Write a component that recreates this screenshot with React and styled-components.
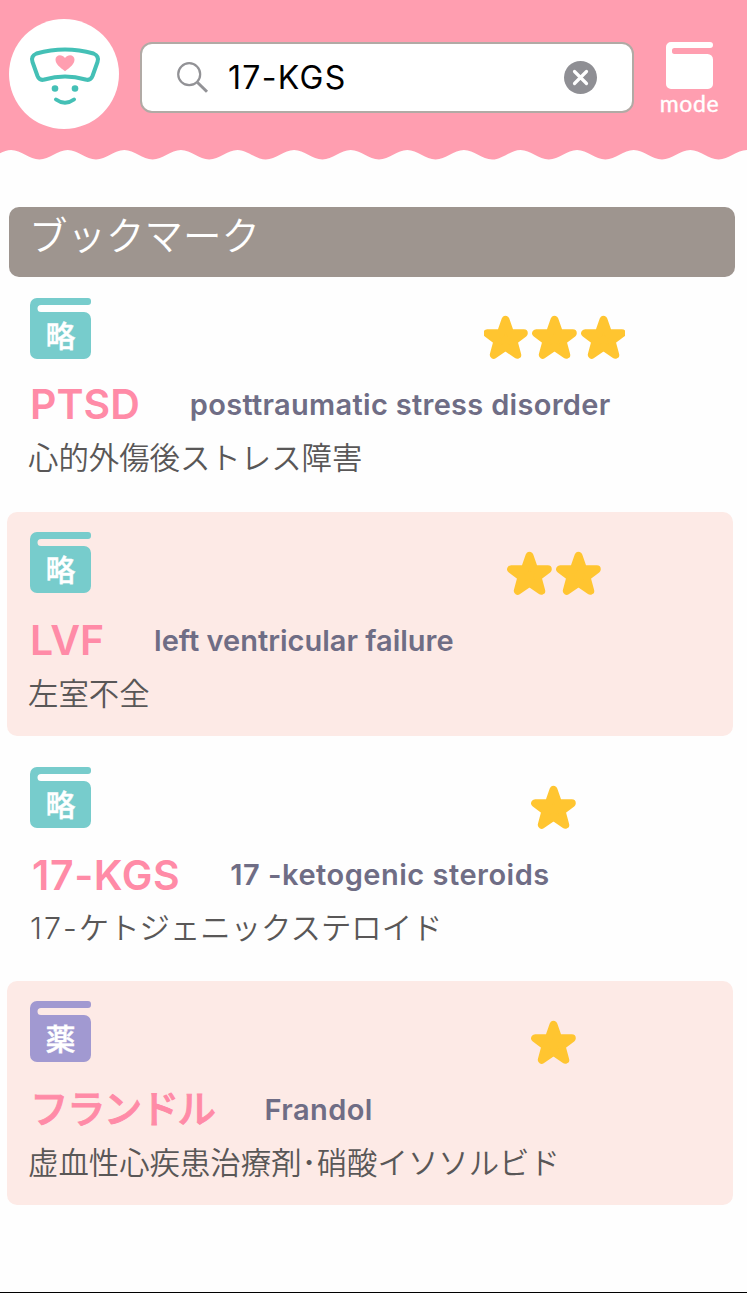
import React from "react";
import styled, { createGlobalStyle } from "styled-components";

const entries = [
  {
    kind: "略",
    color: "#77cccc",
    stars: 3,
    title: "PTSD",
    spell: "posttraumatic stress disorder",
    spacing: 0.3,
    meaning: "心的外傷後ストレス障害",
  },
  {
    kind: "略",
    color: "#77cccc",
    stars: 2,
    title: "LVF",
    spell: "left ventricular failure",
    spacing: 0,
    meaning: "左室不全",
  },
  {
    kind: "略",
    color: "#77cccc",
    stars: 1,
    title: "17-KGS",
    numeric: true,
    spell: "17 -ketogenic steroids",
    spacing: 0.5,
    prefix: "17-",
    meaning: "ケトジェニックステロイド",
  },
  {
    kind: "薬",
    color: "#a199d1",
    stars: 1,
    title: "フランドル",
    kana: true,
    spell: "Frandol",
    spacing: 0.4,
    meaning: "虚血性心疾患治療剤･硝酸イソソルビド",
  },
];

const wavePath = () => {
  let d = "M-45.5 0V5";
  for (let i = 0; i < 15; i++) {
    d += "c10 0 18.3 9.5 28.3 9.5s18.3 -9.5 28.3 -9.5";
  }
  return d + "V0z";
};

const Book = ({ color, size }) => (
  <svg width={size} height={size} viewBox="0 0 61 61">
    <path
      fill={color}
      d="M7 0H58a3 3 0 0 1 3 3v1a3 3 0 0 1-3 3H11a3.5 3.5 0 0 0 0 7H54a7 7 0 0 1 7 7V54a7 7 0 0 1-7 7H7a7 7 0 0 1-7-7V7a7 7 0 0 1 7-7z"
    />
  </svg>
);

const ModeBook = () => (
  <svg width="47" height="47" viewBox="0 0 47 47">
    <path
      fill="#fff"
      d="M5 0H44a3 3 0 0 1 0 6H8.500a2.750 2.750 0 0 0-2.500 3a2.750 2.750 0 0 0 2.500 3H41.500a5.500 5.500 0 0 1 5.500 5.500V42a5 5 0 0 1-5 5H5a5 5 0 0 1-5-5V5a5 5 0 0 1 5-5z"
    />
  </svg>
);

const Star = () => (
  <svg width="49" height="45" viewBox="-24.5 -22.5 49 45">
    <path
      d="M0-17.7L4.7-4.3H18.3L8 3.5L11.7 17.3L0 9.3L-11.7 17.3L-8 3.5L-18.3-4.3H-4.7z"
      fill="#ffc530"
      stroke="#ffc530"
      strokeWidth="8"
      strokeLinejoin="round"
    />
  </svg>
);

const Nurse = () => (
  <svg width="110" height="110" viewBox="0 0 110 110">
    <circle cx="55" cy="55" r="55" fill="#fff" />
    <g fill="none" stroke="#44c0b6" strokeWidth="4" strokeLinecap="round" strokeLinejoin="round">
      <path d="M27.500 34.500Q56 26.500 84.500 34.500Q90.500 37 88.500 43L83.500 57Q81.500 62 76.500 60.500Q56 54.500 35.500 60.500Q30.500 62 28.500 57L23.500 43Q21.500 37 27.500 34.500z" />
      <path d="M47 80.500Q56 87 65 80.500" />
    </g>
    <g fill="#44c0b6">
      <circle cx="46" cy="69.500" r="3.300" />
      <circle cx="66" cy="69.500" r="3.300" />
    </g>
    <path
      fill="#ff9eb0"
      d="M56 52.200C51 48.500 46.500 45 46.500 40.500C46.500 35.500 53 34.500 56 39C59 34.500 65.500 35.500 65.500 40.500C65.500 45 61 48.500 56 52.200z"
    />
  </svg>
);

const App = () => {
  return (
    <Page>
      <GlobalStyle />
      <Header>
        <Nurse />
        <SearchBox>
          <svg width="32" height="32" viewBox="0 0 32 32" fill="none" stroke="#929296">
            <circle cx="12.200" cy="12.200" r="11" strokeWidth="2.200" />
            <path d="M20.500 20.500L30 29.800" strokeWidth="3" />
          </svg>
          <Query>17-KGS</Query>
          <svg width="33" height="33" viewBox="0 0 33 33">
            <circle cx="16.500" cy="16.500" r="16.500" fill="#8f8f94" />
            <path
              d="M10.500 10.500L22.500 22.500M22.500 10.500L10.500 22.500"
              stroke="#fff"
              strokeWidth="3.200"
              strokeLinecap="round"
            />
          </svg>
        </SearchBox>
        <Mode>
          <ModeBook />
          <span>mode</span>
        </Mode>
      </Header>
      <Wave width="747" height="15" viewBox="0 0 747 15">
        <path d={wavePath()} fill="#ff9eb0" />
      </Wave>
      <Heading>ブックマーク</Heading>
      <List>
        {entries.map((entry, i) => (
          <Entry key={entry.title} $tinted={i % 2 === 1}>
            <Top>
              <Badge>
                <Book color={entry.color} size={61} />
                <Kind>{entry.kind}</Kind>
              </Badge>
              <Stars $lift={i === 0}>
                {Array.from({ length: entry.stars }, (_, n) => (
                  <Star key={n} />
                ))}
              </Stars>
            </Top>
            <Names>
              <Title $kana={entry.kana} $numeric={entry.numeric}>
                {entry.title}
              </Title>
              <Spell $spacing={entry.spacing}>{entry.spell}</Spell>
            </Names>
            <Meaning>
              {entry.prefix && <Prefix>{entry.prefix}</Prefix>}
              {entry.meaning}
            </Meaning>
          </Entry>
        ))}
      </List>
    </Page>
  );
};

export default App;

const GlobalStyle = createGlobalStyle`
  * {
    box-sizing: border-box;
  }

  body {
    margin: 0;
    background: #fff;
    font-family: Inter, "Noto Sans CJK JP", sans-serif;
  }

  svg {
    display: block;
    flex-shrink: 0;
  }
`;

const Page = styled.div`
  width: 747px;
  height: 1293px;
  overflow: hidden;
  background: #fefefe;
  border-bottom: 1px solid #000;
`;

const Header = styled.div`
  display: flex;
  align-items: flex-start;
  height: 145px;
  padding: 19px 0 0 9px;
  background: #ff9eb0;
`;

const SearchBox = styled.div`
  display: flex;
  align-items: center;
  width: 494px;
  height: 71px;
  margin: 23px 0 0 21px;
  padding: 0 35px 0 35px;
  background: #fff;
  border: 2.5px solid #b1aaa5;
  border-radius: 12px;
`;

const Query = styled.span`
  flex: 1;
  margin-left: 19px;
  font-size: 32px;
  line-height: 40px;
  letter-spacing: 1.3px;
  color: #000;
`;

const Mode = styled.div`
  display: flex;
  flex-direction: column;
  align-items: center;
  width: 70px;
  margin: 23px 0 0 20px;

  span {
    margin-left: 1px;
    font-family: Lato, sans-serif;
    font-size: 23px;
    line-height: 28px;
    letter-spacing: 0.6px;
    color: #fff;
    -webkit-text-stroke: 0.4px #fff;
  }
`;

const Wave = styled.svg`
  height: 15px;
`;

const Heading = styled.div`
  width: 726px;
  height: 70px;
  margin: 47px 0 0 9px;
  padding-left: 20px;
  background: #9e958f;
  border-radius: 10px;
  font-size: 38.5px;
  font-weight: 350;
  line-height: 58px;
  color: #fff;
`;

const List = styled.div`
  display: flex;
  flex-direction: column;
  gap: 10px;
  width: 726.5px;
  margin-left: 6.5px;
`;

const Entry = styled.div`
  height: 224.5px;
  padding: 20.5px 0 0 21.5px;
  background: ${(props) => (props.$tinted ? "#fdeae6" : "transparent")};
  border-radius: 10px;
`;

const Top = styled.div`
  display: flex;
  padding-left: 2px;
`;

const Badge = styled.div`
  display: grid;
  width: 61px;
  height: 61px;

  > * {
    grid-area: 1 / 1;
  }
`;

const Kind = styled.span`
  padding-top: 16px;
  font-size: 30px;
  font-weight: 500;
  line-height: 44px;
  text-align: center;
  color: #fff;
  -webkit-text-stroke: 0.4px #fff;
`;

const Stars = styled.div`
  display: flex;
  justify-content: center;
  width: 141px;
  height: 45px;
  margin: ${(props) => (props.$lift ? "17px" : "18.5px")} 0 0 393px;
  padding-right: ${(props) => (props.$lift ? "0" : "2px")};
  overflow: hidden;
`;

const Names = styled.div`
  display: flex;
  align-items: center;
  gap: 50px;
  height: 50px;
  margin-top: 19.5px;
  padding-left: 2px;
  white-space: nowrap;
`;

const Title = styled.span`
  margin-left: ${(props) => (props.$numeric ? "2px" : "0")};
  font-size: ${(props) => (props.$kana ? "38.5px" : "41px")};
  font-weight: ${(props) => (props.$kana ? 500 : 600)};
  letter-spacing: ${(props) => (props.$kana ? "-1.6px" : props.$numeric ? "0.6px" : "0")};
  line-height: 50px;
  color: #ff8ba7;
  -webkit-text-stroke: ${(props) => (props.$kana ? "0.9px #ff8ba7" : "0")};
`;

const Spell = styled.span`
  padding-top: 1px;
  font-size: 29px;
  font-weight: 600;
  line-height: 50px;
  letter-spacing: ${(props) => props.$spacing}px;
  color: #6f6d85;
`;

const Meaning = styled.div`
  margin-top: 8.5px;
  font-size: 30.4px;
  font-weight: 350;
  line-height: 40px;
  white-space: nowrap;
  color: #595757;
`;

const Prefix = styled.span`
  margin-left: 2px;
  letter-spacing: 2px;
`;
